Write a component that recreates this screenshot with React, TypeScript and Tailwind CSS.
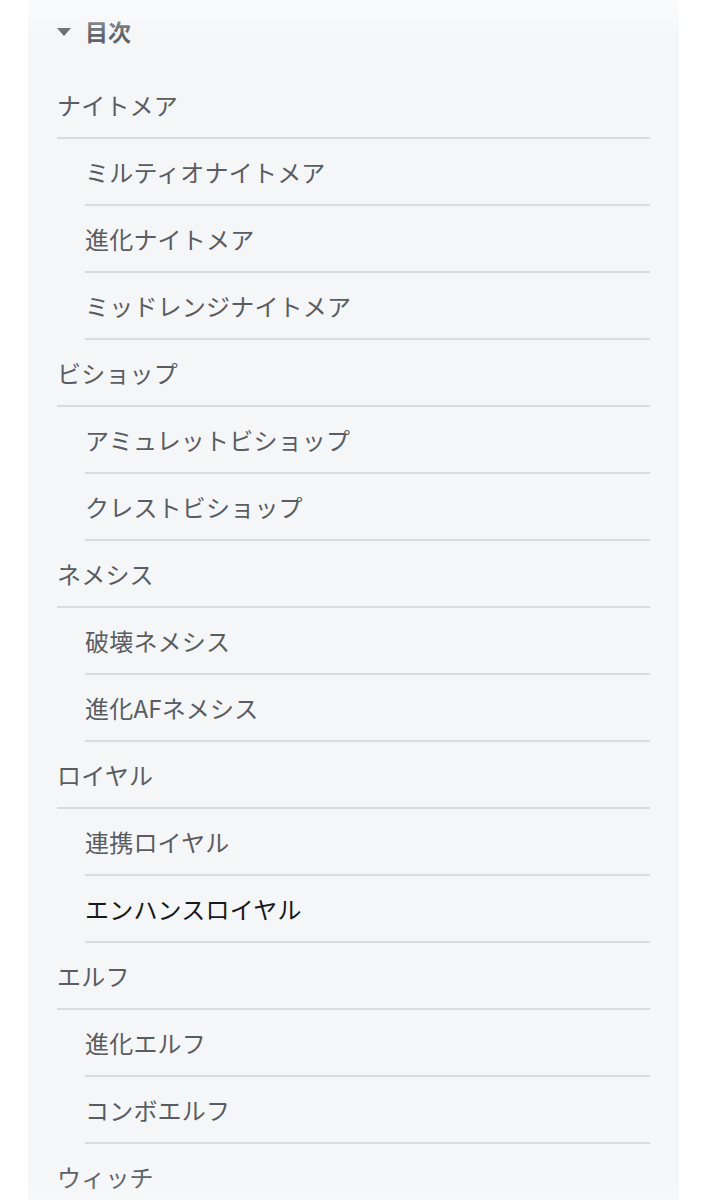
import React from "react";

type Item = { label: string; level: 0 | 1; active?: boolean };

const items: Item[] = [
  { label: "ナイトメア", level: 0 },
  { label: "ミルティオナイトメア", level: 1 },
  { label: "進化ナイトメア", level: 1 },
  { label: "ミッドレンジナイトメア", level: 1 },
  { label: "ビショップ", level: 0 },
  { label: "アミュレットビショップ", level: 1 },
  { label: "クレストビショップ", level: 1 },
  { label: "ネメシス", level: 0 },
  { label: "破壊ネメシス", level: 1 },
  { label: "進化AFネメシス", level: 1 },
  { label: "ロイヤル", level: 0 },
  { label: "連携ロイヤル", level: 1 },
  { label: "エンハンスロイヤル", level: 1, active: true },
  { label: "エルフ", level: 0 },
  { label: "進化エルフ", level: 1 },
  { label: "コンボエルフ", level: 1 },
  { label: "ウィッチ", level: 0 },
];

export default function App() {
  return (
    <div
      className="relative w-[707px] h-[1200px] overflow-hidden bg-white"
      style={{ fontFamily: '"Noto Sans CJK JP", "Noto Sans", sans-serif' }}
    >
      <div className="ml-[28px] w-[651px] h-full bg-[#f5f6f8] pl-[29px] pr-[29px]">
        <div className="flex items-center gap-[14px] pt-[15px] pb-[25px]">
          <svg width="14" height="9" viewBox="0 0 14 9" className="mt-[2px]">
            <path d="M0 0 H14 L7 8 Z" fill="#606368" />
          </svg>
          <span className="text-[23px] leading-[32px] font-bold text-[#5f6368]">目次</span>
        </div>
        <ul>
          {items.map((it, i) => (
            <li key={i} className={it.level === 1 ? "ml-[28px]" : ""}>
              <div
                className={
                  "py-[16px] text-[24px] leading-[33px] tracking-[0.2px] " +
                  (it.active ? "text-[#16181b]" : "text-[#595d62]")
                }
              >
                {it.label}
              </div>
              <div className="h-[2px] bg-[#d9dbde]" />
            </li>
          ))}
        </ul>
      </div>
      <div className="pointer-events-none absolute left-0 top-0 w-full h-[36px] bg-gradient-to-b from-white/60 to-transparent" />
      <div className="pointer-events-none absolute left-0 bottom-0 w-full h-[30px] bg-gradient-to-t from-white/20 to-transparent" />
    </div>
  );
}
